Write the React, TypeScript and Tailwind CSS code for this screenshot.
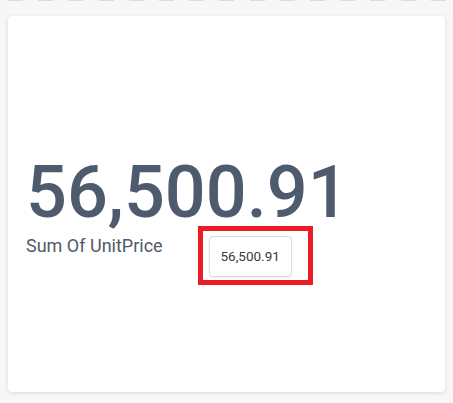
// KPI 카드 한 장: 큰 합계 숫자 + 라벨 + 값 배지 (빨간 강조 박스)

const DASHES = Array.from({ length: 15 }, (_, i) => i);

function KpiCard() {
  return (
    <div className="flex h-[376px] w-[437px] flex-col justify-center rounded-[4px] bg-white pt-[26px] pl-[18px] shadow-[0_1px_4px_rgba(0,0,0,0.12)]">
      <div className="text-[72px] leading-[72px] font-medium text-[#4e5a6d]">
        56,500.91
      </div>
      <div className="mt-[4px] flex items-start">
        <span className="text-[18px] leading-[26px] text-[#505a68]">
          Sum Of UnitPrice
        </span>
        <div className="relative mt-[3px] ml-[46px]">
          {/* 강조 표시 */}
          <div className="pointer-events-none absolute -top-[10px] -right-[21px] -bottom-[8px] -left-[11px] border-[5px] border-[#ed1c24]" />
          <button
            type="button"
            className="flex h-[41px] w-[83px] items-center justify-center rounded-[4px] border border-[#dcdcdc] bg-white text-[13.5px] text-[#3a3a3a] shadow-[0_1px_2px_rgba(0,0,0,0.08)]"
          >
            56,500.91
          </button>
        </div>
      </div>
    </div>
  );
}

export default function App() {
  return (
    <div
      className="h-[403px] w-[453px] bg-[#f7f7f7]"
      style={{ fontFamily: "Roboto, 'Liberation Sans', sans-serif" }}
    >
      <div className="ml-[8px] flex w-[438px] justify-between">
        {DASHES.map((i) => (
          <span key={i} className="h-px w-[15px] bg-[#dcdcdc]" />
        ))}
      </div>
      <div className="pt-[15px] pl-[8px]">
        <KpiCard />
      </div>
    </div>
  );
}
